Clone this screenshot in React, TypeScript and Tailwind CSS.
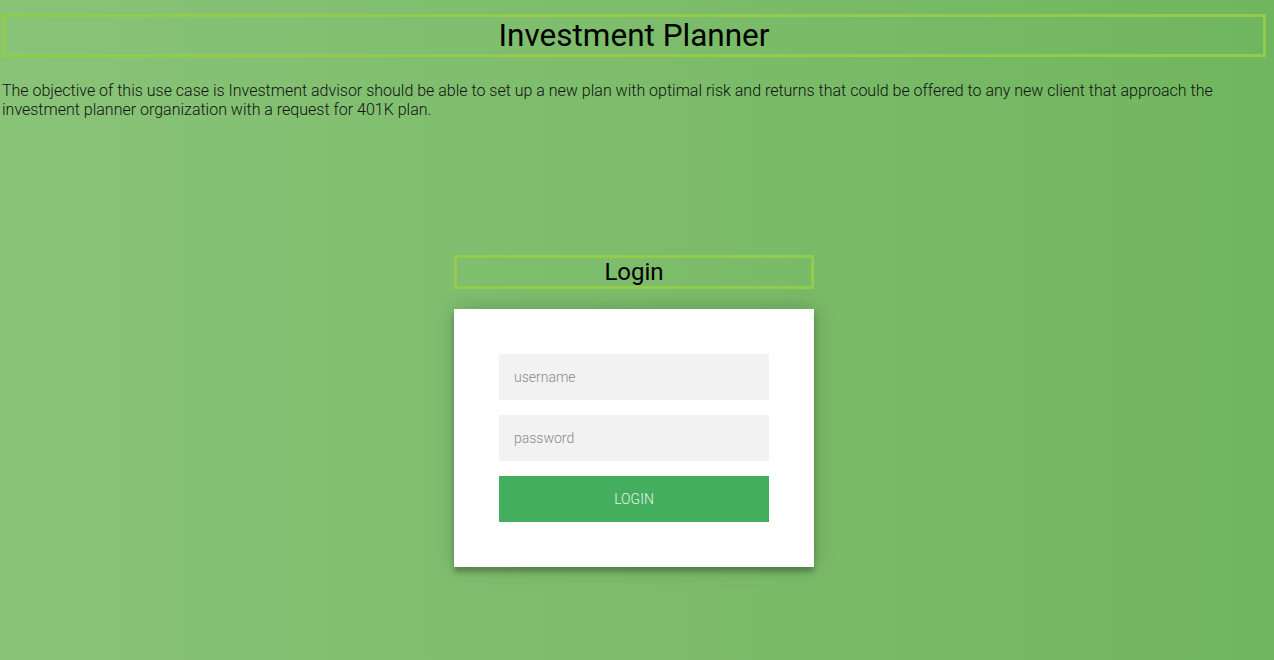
import React from "react";

export default function App() {
  return (
    <div
      className="min-h-screen w-full bg-[linear-gradient(to_right,#89c378,#70b65e)] text-black"
      style={{ fontFamily: "Roboto, 'Liberation Sans', sans-serif" }}
    >
      <div className="pt-[14px] px-[2px]">
        <div className="w-[1264px] h-[43px] border-[3px] border-[#93cb4b] flex items-center justify-center">
          <h1 className="text-[31.5px] leading-none font-normal">Investment Planner</h1>
        </div>
      </div>
      <p className="mt-[24px] px-[2px] text-[16px] leading-[19px] font-light text-[#111]">
        The objective of this use case is Investment advisor should be able to set up a new plan with optimal risk and returns that could be offered to any new client that approach the investment planner organization with a request for 401K plan.
      </p>
      <div className="flex flex-col items-center mt-[136px] pr-[6px]">
        <div className="w-[360px] h-[34px] border-[3px] border-[#93cb4b] flex items-center justify-center">
          <h2 className="text-[24px] leading-none font-normal">Login</h2>
        </div>
        <form className="mt-[20px] w-[360px] bg-white p-[45px] flex flex-col gap-[15px] shadow-[0_0_20px_0_rgba(0,0,0,0.2),0_5px_5px_0_rgba(0,0,0,0.24)]">
          <input
            className="h-[46px] w-full bg-[#f2f2f2] px-[15px] text-[14px] font-light outline-none placeholder:text-[#8a8a8a]"
            placeholder="username"
          />
          <input
            className="h-[46px] w-full bg-[#f2f2f2] px-[15px] text-[14px] font-light outline-none placeholder:text-[#8a8a8a]"
            placeholder="password"
            type="password"
          />
          <button
            type="button"
            className="h-[46px] w-full bg-[#43ae5e] text-[14px] font-light uppercase text-[#e6f5e9]"
          >
            LOGIN
          </button>
        </form>
      </div>
    </div>
  );
}
